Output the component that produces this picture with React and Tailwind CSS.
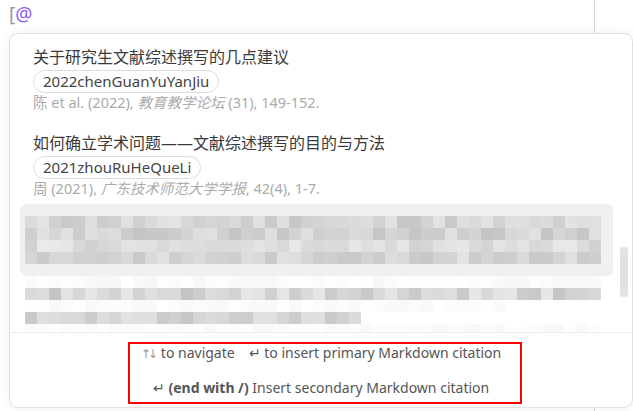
import React from 'react'

// deterministic noise for the blurred rows
function makeRow(seed, count, lo, hi) {
  let s = seed
  const out = []
  for (let i = 0; i < count; i++) {
    s = (s * 9301 + 49297) % 233280
    const v = Math.round(lo + (s / 233280) * (hi - lo))
    out.push(`rgb(${v},${v},${v})`)
  }
  return out
}

function MosaicRow({ seed, count, lo, hi }) {
  const row = makeRow(seed, count, lo, hi)
  return (
    <div className="flex h-[12px]">
      {row.map((c, i) => (
        <div key={i} className="w-[12px] h-[12px] shrink-0" style={{ backgroundColor: c }} />
      ))}
    </div>
  )
}

const ITEMS = [
  {
    title: '关于研究生文献综述撰写的几点建议',
    key: '2022chenGuanYuYanJiu',
    author: '陈 et al. (2022), ',
    journal: '教育教学论坛',
    rest: ' (31), 149-152.',
  },
  {
    title: '如何确立学术问题——文献综述撰写的目的与方法',
    key: '2021zhouRuHeQueLi',
    author: '周 (2021), ',
    journal: '广东技术师范大学学报',
    rest: ', 42(4), 1-7.',
  },
]

function Item({ item }) {
  return (
    <div className="flex flex-col items-start">
      <div className="text-[16px] leading-[24px] text-[#3a3a3a]">{item.title}</div>
      <div className="mt-[1px] h-[23px] px-[9px] rounded-full border border-[#dcdcdc] flex items-center text-[15px] text-[#444]">
        {item.key}
      </div>
      <div className="text-[14.5px] leading-[19px] text-[#ababab]">
        {item.author}
        <span className="italic">{item.journal}</span>
        {item.rest}
      </div>
    </div>
  )
}

export default function App() {
  return (
    <div className="relative w-[633px] h-[411px] bg-white overflow-hidden font-['Noto_Sans','Noto_Sans_CJK_SC',sans-serif]">
      <div className="w-[595px] h-full border-r border-[#d4d4d4] pl-[9px] pt-[1px]">
        <div className="text-[19px] leading-[26px]">
          <span className="text-[#9a9a9a]">[</span>
          <span className="text-[#8b5cf6]">@</span>
        </div>
      </div>

      <div className="absolute left-[9px] top-[33px] w-[624px] h-[375px] bg-white rounded-[9px] border border-[#e0e0e0] shadow-[0_0_10px_rgba(0,0,0,0.07)] flex flex-col overflow-hidden">
        <div className="relative h-[298px] overflow-hidden">
          <div className="pl-[23px] pt-[11px] flex flex-col gap-[19px]">
            {ITEMS.map((it) => (
              <Item key={it.key} item={it} />
            ))}
          </div>

          <div className="mt-[6px] ml-[10px] w-[593px] h-[72px] bg-[#f0f0f0] rounded-[6px] pt-[12px] pl-[5px]">
            <MosaicRow seed={11} count={48} lo={198} hi={230} />
            <MosaicRow seed={29} count={48} lo={196} hi={226} />
            <MosaicRow seed={47} count={48} lo={208} hi={234} />
            <MosaicRow seed={83} count={48} lo={200} hi={226} />
          </div>
          <div className="ml-[15px]">
            <MosaicRow seed={5} count={48} lo={246} hi={255} />
            <MosaicRow seed={61} count={48} lo={194} hi={232} />
            <MosaicRow seed={17} count={40} lo={248} hi={255} />
            <MosaicRow seed={97} count={28} lo={198} hi={230} />
            <MosaicRow seed={3} count={48} lo={248} hi={255} />
          </div>

          <div className="absolute right-[4px] top-[213px] w-[8px] h-[50px] rounded-full bg-[#e2e2e2]" />
        </div>

        <div className="flex-1 border-t border-[#ececec] flex justify-center pt-[9px] pl-[7px]">
          <div className="w-[394px] h-[62px] border-2 border-[#ff0000] flex flex-col items-center pr-[7px] text-[14px] text-[#555]">
            <div className="leading-[18px]">
              <span className="font-['DejaVu_Sans'] text-[12px] tracking-[-3px] text-[#999]">↑↓</span>
              <span className="ml-[6px]">to navigate</span>
              <span className="ml-[14px]">↵</span> to insert primary Markdown citation
            </div>
            <div className="leading-[18px] mt-[16px]">
              ↵ <span className="font-bold">(end with /)</span> Insert secondary Markdown citation
            </div>
          </div>
        </div>
      </div>
    </div>
  )
}
